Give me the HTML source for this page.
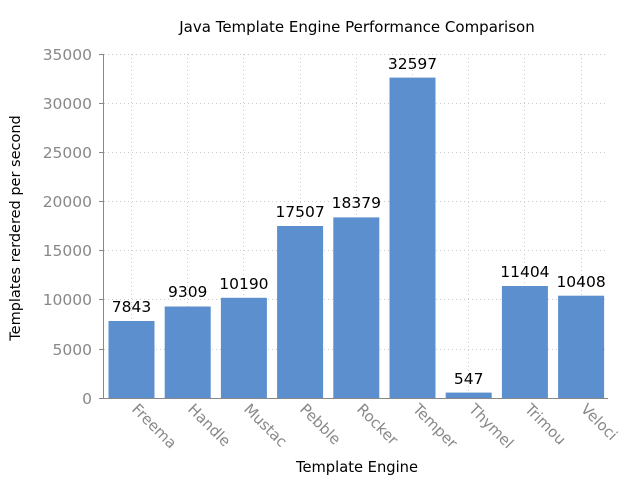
<!DOCTYPE html>
<html><head><style>body{margin:0;background:#fff}svg{display:block}</style></head><body>
<svg width="640" height="480" xmlns="http://www.w3.org/2000/svg" font-family="DejaVu Sans, Verdana, sans-serif">
<rect width="640" height="480" fill="#fff"/>
<text x="357" y="32" font-size="15" text-anchor="middle" fill="#000">Java Template Engine Performance Comparison</text>
<g stroke="#ccc" stroke-dasharray="1,3" stroke-width="1">
<line x1="104" x2="608" y1="54.5" y2="54.5"/><line x1="104" x2="608" y1="103.5" y2="103.5"/><line x1="104" x2="608" y1="152.5" y2="152.5"/><line x1="104" x2="608" y1="201.5" y2="201.5"/><line x1="104" x2="608" y1="250.5" y2="250.5"/><line x1="104" x2="608" y1="299.5" y2="299.5"/><line x1="104" x2="608" y1="349.5" y2="349.5"/>
<line x1="131.5" x2="131.5" y1="54" y2="398"/><line x1="187.5" x2="187.5" y1="54" y2="398"/><line x1="243.5" x2="243.5" y1="54" y2="398"/><line x1="300.5" x2="300.5" y1="54" y2="398"/><line x1="356.5" x2="356.5" y1="54" y2="398"/><line x1="412.5" x2="412.5" y1="54" y2="398"/><line x1="468.5" x2="468.5" y1="54" y2="398"/><line x1="524.5" x2="524.5" y1="54" y2="398"/><line x1="581.5" x2="581.5" y1="54" y2="398"/>
</g>
<g fill="#5b8fcd">
<rect x="108.5" y="321" width="46" height="77"/>
<rect x="164.7" y="306.5" width="46" height="91.5"/>
<rect x="220.9" y="297.8" width="46" height="100.2"/>
<rect x="277.1" y="226" width="46" height="172"/>
<rect x="333.3" y="217.4" width="46" height="180.6"/>
<rect x="389.5" y="77.6" width="46" height="320.4"/>
<rect x="445.7" y="392.6" width="46" height="5.4"/>
<rect x="501.9" y="286" width="46" height="112"/>
<rect x="558.1" y="295.7" width="46" height="102.3"/>
</g>
<g stroke="#888" stroke-width="1">
<line x1="103.5" x2="103.5" y1="54" y2="398"/>
<line x1="103" x2="608" y1="398.5" y2="398.5"/>
<line x1="99" x2="103" y1="54.5" y2="54.5"/><line x1="99" x2="103" y1="103.5" y2="103.5"/><line x1="99" x2="103" y1="152.5" y2="152.5"/><line x1="99" x2="103" y1="201.5" y2="201.5"/><line x1="99" x2="103" y1="250.5" y2="250.5"/><line x1="99" x2="103" y1="299.5" y2="299.5"/><line x1="99" x2="103" y1="349.5" y2="349.5"/><line x1="99" x2="103" y1="398.5" y2="398.5"/>
</g>
<g font-size="15.5" fill="#888" text-anchor="end">
<text x="92" y="60">35000</text><text x="92" y="109">30000</text><text x="92" y="158">25000</text><text x="92" y="207">20000</text><text x="92" y="256">15000</text><text x="92" y="305">10000</text><text x="92" y="355">5000</text><text x="92" y="404">0</text>
</g>
<g font-size="15.5" fill="#000" text-anchor="middle">
<text x="131.5" y="312">7843</text><text x="187.7" y="297">9309</text><text x="243.9" y="289">10190</text><text x="300.1" y="217">17507</text><text x="356.3" y="208">18379</text><text x="412.5" y="69">32597</text><text x="468.7" y="384">547</text><text x="524.9" y="277">11404</text><text x="581.1" y="287">10408</text>
</g>
<g font-size="15" fill="#888">
<text transform="translate(131,410) rotate(45)">Freema</text>
<text transform="translate(187,410) rotate(45)">Handle</text>
<text transform="translate(243,410) rotate(45)">Mustac</text>
<text transform="translate(299,410) rotate(45)">Pebble</text>
<text transform="translate(356,410) rotate(45)">Rocker</text>
<text transform="translate(412,410) rotate(45)">Temper</text>
<text transform="translate(468,410) rotate(45)">Thymel</text>
<text transform="translate(524,410) rotate(45)">Trimou</text>
<text transform="translate(580,410) rotate(45)">Veloci</text>
</g>
<text x="357" y="472" font-size="14.7" text-anchor="middle" fill="#000">Template Engine</text>
<text transform="translate(20,228) rotate(-90)" font-size="14.5" text-anchor="middle" fill="#000">Templates rerdered per second</text>
</svg>
</body></html>
